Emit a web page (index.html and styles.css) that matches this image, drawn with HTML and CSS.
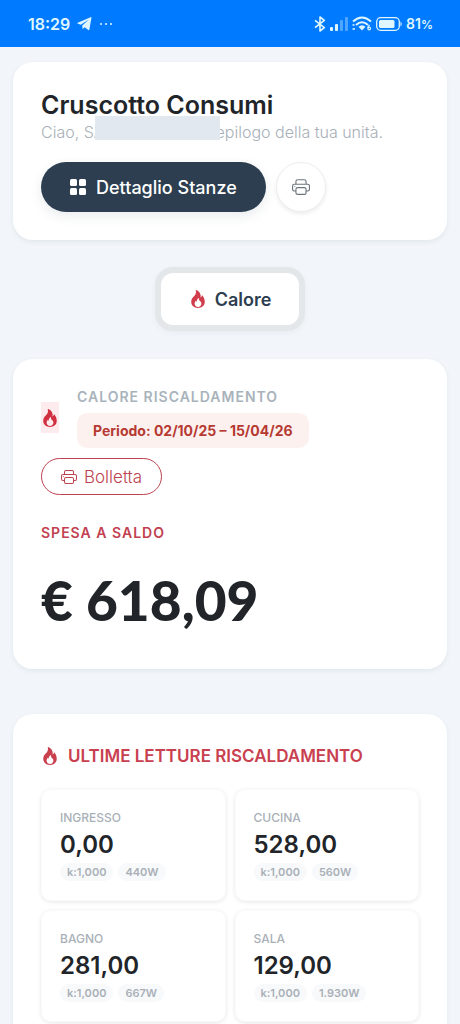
FILE: index.html
```html
<!DOCTYPE html>
<html lang="it">
<head>
<meta charset="utf-8">
<meta name="viewport" content="width=device-width, initial-scale=1">
<title>Cruscotto Consumi</title>
<link rel="stylesheet" href="styles.css">
</head>
<body>
<svg class="sprite" aria-hidden="true">
  <symbol id="fire" viewBox="0 0 16 16"><path d="M8 16c3.314 0 6-2 6-5.500 0-1.500-.5-4-2.500-6 .25 1.500-1.250 2-1.250 2C11 4 9 .5 6 0c.357 2 .5 4-2 6-1.250 1-2 2.729-2 4.500C2 14 4.686 16 8 16m0-1c-1.657 0-3-1-3-2.750 0-.75.25-2 1.250-3C6.125 10 7 10.500 7 10.500c-.375-1.250.5-3.250 2-3.500-.179 1-.25 2 1 3 .625.5 1 1.364 1 2.250C11 14 9.657 15 8 15"/></symbol>
  <symbol id="printer" viewBox="0 0 16 16"><path d="M5 1a2 2 0 0 0-2 2v2H2a2 2 0 0 0-2 2v3a2 2 0 0 0 2 2h1v1a2 2 0 0 0 2 2h6a2 2 0 0 0 2-2v-1h1a2 2 0 0 0 2-2V7a2 2 0 0 0-2-2h-1V3a2 2 0 0 0-2-2zM4 3a1 1 0 0 1 1-1h6a1 1 0 0 1 1 1v2H4zm1 5a2 2 0 0 0-2 2v1H2a1 1 0 0 1-1-1V7a1 1 0 0 1 1-1h12a1 1 0 0 1 1 1v3a1 1 0 0 1-1 1h-1v-1a2 2 0 0 0-2-2zm7 2v3a1 1 0 0 1-1 1H5a1 1 0 0 1-1-1v-3a1 1 0 0 1 1-1h6a1 1 0 0 1 1 1"/><circle cx="2.500" cy="7.500" r=".5"/></symbol>
</svg>

<header class="status">
  <div class="status-group">
    <span class="clock">18:29</span>
    <svg width="15" height="14" viewBox="0 0 15 14" fill="currentColor" aria-hidden="true"><path d="M14.500.6 12.400 12.600q-.2.900-1 .4L7.600 10.300l-1.900 2-.5-3.900L12 2.600 3.700 7.700.6 6.600q-.8-.5.1-.9L13.600.2q.9-.3.900.4Z"/></svg>
    <svg width="14" height="4" viewBox="0 0 14 4" fill="currentColor" aria-hidden="true"><circle cx="2" cy="2" r="1"/><circle cx="7" cy="2" r="1"/><circle cx="12" cy="2" r="1"/></svg>
  </div>
  <div class="status-group status-right">
    <svg width="12" height="16" viewBox="0 0 12 16" fill="none" stroke="currentColor" stroke-width="1.600" stroke-linejoin="round" aria-hidden="true"><path d="M1 4.300 10.300 11.700 6 15V1l4.300 3.300L1 11.700"/></svg>
    <svg width="18" height="14" viewBox="0 0 18 14" fill="currentColor" aria-hidden="true"><rect x="0" y="10" width="3" height="4" rx="1"/><rect x="5" y="7" width="3" height="7" rx="1"/><g opacity=".35"><rect x="10" y="3" width="3" height="11" rx="1"/><rect x="15" y="0" width="3" height="14" rx="1"/></g></svg>
    <svg width="20" height="15" viewBox="0 0 20 15" fill="none" stroke="currentColor" stroke-width="2" aria-hidden="true"><path d="M1 5.500Q10-2.500 19 5.500M4 9Q10 3.500 16 9"/><path d="M6.500 10.800Q10 7.500 13.500 10.800L10 14.500Z" fill="currentColor" stroke="none"/><path d="M.5 9h2M.5 13h2.500" stroke-width="1.500"/><path d="M17.500 9Q15.800 10.500 15.900 12.300" stroke-width="1.200"/><circle cx="17.200" cy="12.500" r="1.300" stroke-width="1.200"/></svg>
    <svg width="26" height="14" viewBox="0 0 26 14" aria-hidden="true"><rect x=".7" y=".7" width="22.600" height="12.600" rx="4" fill="none" stroke="currentColor" stroke-width="1.300"/><rect x="3" y="3" width="15.500" height="8" rx="1.500" fill="currentColor"/><path d="M24.500 4.500q2.500 2.500 0 5Z" fill="currentColor"/></svg>
    <span class="charge">81<small>%</small></span>
  </div>
</header>

<main class="page">
  <section class="card intro">
    <h1>Cruscotto Consumi</h1>
    <p class="greeting"><span>Ciao, SA</span><span class="mask"></span><span>epilogo della tua unità.</span></p>
    <div class="actions">
      <button class="primary" type="button"><svg width="16" height="16" viewBox="0 0 16 16" fill="currentColor" aria-hidden="true"><rect width="7" height="7" rx="1.500"/><rect x="9" width="7" height="7" rx="1.500"/><rect y="9" width="7" height="7" rx="1.500"/><rect x="9" y="9" width="7" height="7" rx="1.500"/></svg>Dettaglio Stanze</button>
      <button class="round" type="button" aria-label="Stampa"><svg class="icon-l"><use href="#printer"/></svg></button>
    </div>
  </section>

  <nav class="tabs"><button class="tab" type="button"><svg class="icon-l red"><use href="#fire"/></svg>Calore</button></nav>

  <section class="card summary">
    <div class="period-row">
      <span class="flame"><svg class="icon-l"><use href="#fire"/></svg></span>
      <div>
        <h2 class="eyebrow">CALORE RISCALDAMENTO</h2>
        <span class="period">Periodo: 02/10/25 – 15/04/26</span>
      </div>
    </div>
    <button class="bill" type="button"><svg class="icon-m"><use href="#printer"/></svg>Bolletta</button>
    <h3 class="label">SPESA A SALDO</h3>
    <p class="amount">€ 618,09</p>
  </section>

  <section class="card readings">
    <h2 class="section-title"><svg class="icon-l"><use href="#fire"/></svg>ULTIME LETTURE RISCALDAMENTO</h2>
    <div class="grid">
      <article class="room"><h3>INGRESSO</h3><p>0,00</p><div class="tags"><span>k:1,000</span><span>440W</span></div></article>
      <article class="room"><h3>CUCINA</h3><p>528,00</p><div class="tags"><span>k:1,000</span><span>560W</span></div></article>
      <article class="room"><h3>BAGNO</h3><p>281,00</p><div class="tags"><span>k:1,000</span><span>667W</span></div></article>
      <article class="room"><h3>SALA</h3><p>129,00</p><div class="tags"><span>k:1,000</span><span>1.930W</span></div></article>
    </div>
  </section>
</main>
</body>
</html>
```
FILE: styles.css
```css
* { box-sizing: border-box; }
html { background: #f2f6fa; }
body { margin: 0; font-family: Inter, "Open Sans", sans-serif; color: #212529; overflow-x: hidden; }
h1, h2, h3, p { margin: 0; }
button { font: inherit; border: 0; cursor: pointer; }
svg { flex: none; }
.sprite { position: absolute; width: 0; height: 0; }
.icon-l { width: 18px; height: 18px; fill: currentColor; }
.icon-m { width: 16px; height: 16px; fill: currentColor; }
.red { color: #d03d4d; }

.status { height: 47px; padding: 0 27px 0 28px; background: #007bff; color: #dff6ff; display: flex; align-items: center; justify-content: space-between; }
.status-group { display: flex; align-items: center; gap: 7px; }
.status-right { gap: 4px; }
.clock { font-size: 16px; font-weight: 600; }
.charge { font-size: 14px; font-weight: 600; }
.charge small { font-size: 12px; }

.page { padding: 15px 13px 0; }
.card { background: #fff; border-radius: 20px; padding: 28px; box-shadow: 0 2px 5px rgba(40, 60, 80, .08); }

h1 { font-size: 25px; line-height: 30px; font-weight: 600; }
.greeting { display: flex; font-size: 16px; line-height: 24px; font-weight: 300; color: #a8b0b8; white-space: nowrap; }
.mask { width: 125px; height: 24px; margin: 0 -4px 0 -10px; transform: translateY(-4px); background: #e1e8f0; z-index: 1; }
.actions { display: flex; gap: 10px; margin-top: 18px; }
.primary { display: flex; align-items: center; gap: 10px; height: 50px; padding: 0 29px; border-radius: 25px; background: #2c3e50; color: #fff; font-size: 18px; font-weight: 500; box-shadow: 0 4px 12px rgba(44, 62, 80, .1); }
.round { display: grid; place-items: center; width: 50px; height: 50px; padding: 0; border: 1px solid #eceef0; border-radius: 50%; background: #fff; color: #6c757d; box-shadow: 0 2px 4px rgba(0, 0, 0, .08); }

.tabs { display: flex; justify-content: center; margin: 27px 0 28px; }
.tab { display: flex; align-items: center; gap: 8px; height: 64px; padding: 0 28px; border: 6px solid #e3e7ea; border-radius: 18px; background: #fff; color: #2c3e50; font-size: 18px; font-weight: 600; box-shadow: 0 2px 6px rgba(0, 0, 0, .04); }

.period-row { display: flex; align-items: center; gap: 18px; }
.flame { display: grid; place-items: center; width: 18px; height: 31px; background: #fdebed; color: #d03040; }
.eyebrow { font-size: 14px; line-height: 20px; font-weight: 600; letter-spacing: 1px; color: #a9b3bb; margin-bottom: 6px; }
.period { display: block; padding: 8px 16px; border-radius: 10px; background: #fdf1f0; color: #b63a32; font-size: 14px; line-height: 19px; font-weight: 700; }
.bill { display: flex; align-items: center; gap: 7px; height: 37px; margin-top: 10px; padding: 0 19px; border: 1px solid #bd4350; border-radius: 19px; background: #fff; color: #bd4350; font-size: 17px; font-weight: 300; }
.label { margin-top: 28px; font-size: 14px; line-height: 20px; font-weight: 600; letter-spacing: 1px; color: #c2404f; }
.amount { margin: 20px 0 4px; font-family: Lato, sans-serif; font-size: 55px; line-height: 74px; font-weight: 900; }

.readings { margin-top: 45px; }
.section-title { display: flex; align-items: center; gap: 9px; font-size: 17px; line-height: 28px; font-weight: 600; color: #c9404f; white-space: nowrap; }
.grid { display: grid; grid-template-columns: 1fr 1fr; gap: 9px; margin-top: 19px; }
.room { padding: 19px 18px; border: 1px solid #fafafa; border-radius: 10px; box-shadow: 0 1px 4px rgba(0, 0, 0, .1); }
.room h3 { font-size: 12px; line-height: 18px; font-weight: 500; color: #a9b0b7; }
.room p { font-size: 24px; line-height: 36px; font-weight: 600; }
.tags { display: flex; gap: 5px; }
.tags span { padding: 0 7px; border-radius: 9px; background: #f8f9fb; color: #a9b0b7; font-size: 11px; line-height: 18px; font-weight: 600; }
```
